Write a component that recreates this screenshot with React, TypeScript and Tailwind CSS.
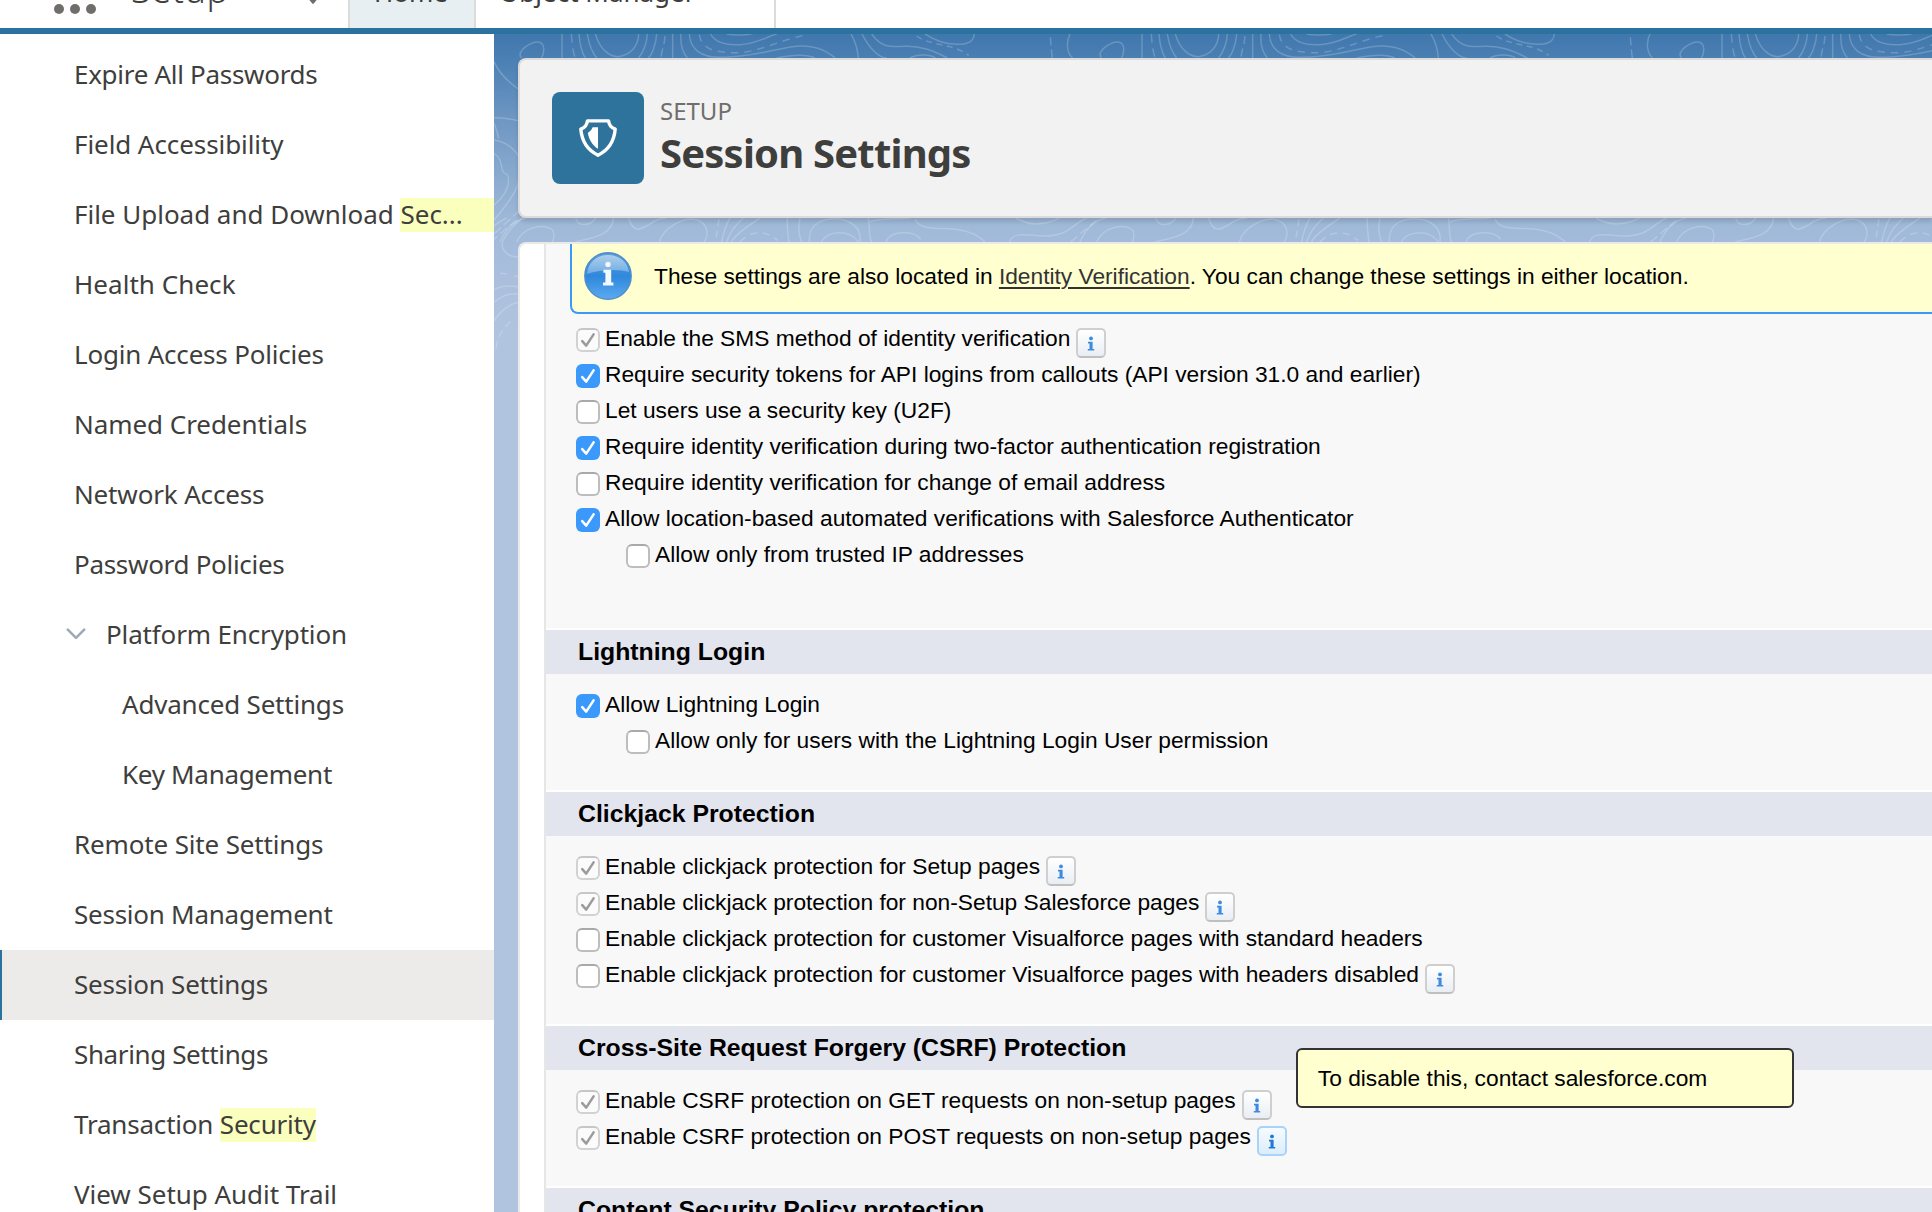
import type { ReactNode } from "react";

type CheckState = "on" | "off" | "locked";

interface Setting {
  label: string;
  state: CheckState;
  indent?: boolean;
  info?: boolean;
  tooltip?: string;
}

interface Section {
  title: string;
  settings: Setting[];
}

interface NavEntry {
  label: ReactNode;
  key: string;
  tracking?: string;
  indent?: boolean;
  selected?: boolean;
  expandable?: boolean;
}

function Mark({ children, wide }: { children: ReactNode; wide?: boolean }) {
  return (
    <span className={`inline-block h-[34px] bg-[#faffbd] leading-8 ${wide ? "w-24" : ""}`}>
      {children}
    </span>
  );
}

const navEntries: NavEntry[] = [
  { key: "expire", label: "Expire All Passwords", tracking: "tracking-[-0.3px]" },
  { key: "field", label: "Field Accessibility", tracking: "tracking-[-0.08px]" },
  {
    key: "file",
    tracking: "tracking-[-0.02px]",
    label: (
      <>
        File Upload and Download <Mark wide>Sec...</Mark>
      </>
    ),
  },
  { key: "health", label: "Health Check", tracking: "tracking-[0.05px]" },
  { key: "login", label: "Login Access Policies", tracking: "tracking-[-0.2px]" },
  { key: "named", label: "Named Credentials", tracking: "tracking-[-0.05px]" },
  { key: "network", label: "Network Access" },
  { key: "password", label: "Password Policies", tracking: "tracking-[-0.3px]" },
  { key: "platform", label: "Platform Encryption", expandable: true },
  { key: "advanced", label: "Advanced Settings", indent: true, tracking: "tracking-[-0.2px]" },
  { key: "keys", label: "Key Management", indent: true, tracking: "tracking-[-0.3px]" },
  { key: "remote", label: "Remote Site Settings" },
  { key: "sessionmgmt", label: "Session Management", tracking: "tracking-[-0.25px]" },
  { key: "session", label: "Session Settings", selected: true, tracking: "tracking-[-0.25px]" },
  { key: "sharing", label: "Sharing Settings", tracking: "tracking-[-0.38px]" },
  {
    key: "transaction",
    tracking: "tracking-[-0.2px]",
    label: (
      <>
        Transaction <Mark>Security</Mark>
      </>
    ),
  },
  { key: "audit", label: "View Setup Audit Trail", tracking: "tracking-[-0.03px]" },
];

const identitySettings: Setting[] = [
  { label: "Enable the SMS method of identity verification", state: "locked", info: true },
  {
    label: "Require security tokens for API logins from callouts (API version 31.0 and earlier)",
    state: "on",
  },
  { label: "Let users use a security key (U2F)", state: "off" },
  { label: "Require identity verification during two-factor authentication registration", state: "on" },
  { label: "Require identity verification for change of email address", state: "off" },
  { label: "Allow location-based automated verifications with Salesforce Authenticator", state: "on" },
  { label: "Allow only from trusted IP addresses", state: "off", indent: true },
];

const sections: Section[] = [
  {
    title: "Lightning Login",
    settings: [
      { label: "Allow Lightning Login", state: "on" },
      {
        label: "Allow only for users with the Lightning Login User permission",
        state: "off",
        indent: true,
      },
    ],
  },
  {
    title: "Clickjack Protection",
    settings: [
      { label: "Enable clickjack protection for Setup pages", state: "locked", info: true },
      { label: "Enable clickjack protection for non-Setup Salesforce pages", state: "locked", info: true },
      {
        label: "Enable clickjack protection for customer Visualforce pages with standard headers",
        state: "off",
      },
      {
        label: "Enable clickjack protection for customer Visualforce pages with headers disabled",
        state: "off",
        info: true,
      },
    ],
  },
  {
    title: "Cross-Site Request Forgery (CSRF) Protection",
    settings: [
      {
        label: "Enable CSRF protection on GET requests on non-setup pages",
        state: "locked",
        info: true,
      },
      {
        label: "Enable CSRF protection on POST requests on non-setup pages",
        state: "locked",
        info: true,
        tooltip: "To disable this, contact salesforce.com",
      },
    ],
  },
  { title: "Content Security Policy protection", settings: [] },
];

function Checkbox({ state }: { state: CheckState }) {
  const look =
    state === "on"
      ? "bg-[#3b99fc]"
      : state === "off"
        ? "border-2 border-[#bdbdbd] border-t-[#a9a9a9] bg-white"
        : "border-2 border-[#d2d2d2] border-t-[#c6c6c6] bg-[#fbfbfb]";
  return (
    <span className={`mt-1.5 flex size-6 shrink-0 items-center justify-center rounded-md ${look}`}>
      {state !== "off" && (
        <svg viewBox="0 0 24 24" className="size-6 shrink-0" fill="none">
          <path
            d="M6.2 13.2L10.2 17.6L17.6 6.4"
            stroke={state === "on" ? "#ffffff" : "#9b9b9b"}
            strokeWidth="2.5"
            strokeLinecap="round"
            strokeLinejoin="round"
          />
        </svg>
      )}
    </span>
  );
}

function InfoButton({ active }: { active?: boolean }) {
  return (
    <span
      className={`mt-1.5 ml-1.5 flex size-[30px] shrink-0 items-center justify-center rounded-[5px] border-2 ${
        active
          ? "border-[#a9d3f8] bg-linear-to-b from-[#f6fbff] to-[#dcedfb]"
          : "border-[#cfcfcf] border-b-[#bfbfbf] bg-linear-to-b from-white to-[#e9eef4]"
      }`}
    >
      <svg viewBox="0 0 10 16" className="mt-px h-4 w-2.5" fill={active ? "#1f78d1" : "#3d8ade"}>
        <circle cx="5" cy="2.4" r="1.9" />
        <path d="M2 5.8H6.6V12.9H8.2V14.6H1.8V12.9H3.5V7.5H2Z" />
      </svg>
    </span>
  );
}

function SettingRow({ setting }: { setting: Setting }) {
  return (
    <div className={`flex h-9 items-start ${setting.indent ? "pl-20" : "pl-[30px]"}`}>
      <Checkbox state={setting.state} />
      <span className="ml-[5px] leading-8 whitespace-nowrap">{setting.label}</span>
      {setting.info && (
        <span className="relative">
          <InfoButton active={Boolean(setting.tooltip)} />
          {setting.tooltip && (
            <span className="absolute -top-[72px] left-[45px] h-[60px] w-[498px] rounded-md border-2 border-[#333333] bg-[#ffffd0] pl-5 leading-[56px] whitespace-nowrap">
              {setting.tooltip}
            </span>
          )}
        </span>
      )}
    </div>
  );
}

function AlertIcon() {
  return (
    <svg viewBox="0 0 48 48" className="size-12 shrink-0">
      <defs>
        <linearGradient id="ball" x1="0" y1="0" x2="0" y2="1">
          <stop offset="0" stopColor="#5f9fd8" />
          <stop offset="0.5" stopColor="#2f88dc" />
          <stop offset="1" stopColor="#5aaaf0" />
        </linearGradient>
        <linearGradient id="gloss" x1="0" y1="0" x2="0" y2="1">
          <stop offset="0" stopColor="#ffffff" stopOpacity="0.5" />
          <stop offset="1" stopColor="#ffffff" stopOpacity="0.28" />
        </linearGradient>
      </defs>
      <circle cx="24" cy="24" r="23.2" fill="url(#ball)" stroke="#4f8fca" strokeWidth="1.4" />
      <path d="M3 22C4 10 13 3 24 3S44 10 45 20C36 17 16 17 3 22Z" fill="url(#gloss)" />
      <circle cx="24" cy="12.4" r="2.7" fill="#f4f8fc" />
      <path d="M19.4 17.8H27.2V30.6H29.4V33.6H19V30.6H21.4V20.8H19.4Z" fill="#f4f8fc" />
    </svg>
  );
}

/* Contour lines that repeat every 580px behind the cards. */
function ContourTile() {
  return (
    <g>
      <path d="M211 22L213 46M214 58L217 84M514 12L516 38M518 55L524 80M795 18L792 42M788 55L783 80" />
      <path d="M270 12C256 40 262 70 278 84" />
      <path d="M364 84C346 62 395 35 415 36C440 40 430 75 425 84" />
      <path d="M486 12V84M818 12V84" />
      <path d="M537 12C540 50 550 75 556 84M562 12C568 50 580 72 590 84" />
      <path d="M586 12C600 60 630 80 655 80C690 76 715 50 716 12" />
      <path d="M742 12C740 50 725 72 716 84M770 12C768 45 755 75 745 84" />
      <path d="M843 12C840 50 850 70 862 84" />
      <path d="M868 12C870 55 900 82 960 82C1080 82 1150 45 1210 48C1260 50 1285 68 1306 84" />
      <path d="M1130 84C1170 76 1220 72 1244 84" />
      <path d="M898 14C905 60 950 70 1020 68C1090 62 1150 25 1225 14" strokeDasharray="22 18" />
      <path d="M932 12C945 38 980 46 1020 44C1070 42 1100 20 1130 12M980 12C1000 16 1030 16 1055 12" />
      <path d="M1353 12C1370 40 1374 70 1375 84M1386 12C1410 60 1440 84 1460 84" />
      <path d="M1415 12C1445 54 1470 50 1510 49C1560 46 1600 62 1642 84M1530 84C1550 72 1590 72 1606 84" />
      <path d="M1550 18C1590 48 1660 40 1706 76" strokeDasharray="18 14" />
      <path d="M1575 12C1610 35 1650 46 1690 42C1712 40 1724 26 1722 12" />

      <path d="M108 564C150 590 200 585 238 564" />
      <path d="M88 636C100 600 150 620 200 618C270 615 280 580 320 564" />
      <path d="M272 636L352 568" strokeDasharray="26 12" />
      <path d="M300 636C320 590 350 570 378 564" />
      <path d="M350 636C370 590 430 580 458 600C466 615 460 630 458 636" />
      <path d="M528 564C530 590 570 590 588 564" />
      <path d="M640 564C640 620 560 625 526 636" />
      <path d="M686 564C700 610 720 600 745 585C770 567 780 566 800 564" />
      <path d="M778 636C790 590 850 565 880 568C930 575 925 620 912 636" />
      <path d="M957 568L946 636" strokeDasharray="20 14" />
      <path d="M990 564C975 590 968 620 965 636M1030 564C1000 590 985 620 980 636M1080 564C1040 590 1000 620 995 636" />
      <path d="M1020 636C1050 600 1100 600 1134 632" strokeDasharray="22 16" />
      <path d="M1162 564C1160 600 1165 620 1167 636M1200 564C1192 600 1198 620 1205 636" />
      <path d="M1228 636C1225 590 1250 570 1300 566C1360 566 1385 600 1380 636" />
      <path d="M1265 636C1280 600 1350 598 1375 636" />
      <path d="M1405 564C1412 600 1405 620 1415 636M1410 575C1440 566 1480 568 1530 564" />
      <path d="M1458 636C1470 600 1540 600 1562 628" />
      <path d="M1545 568C1560 598 1600 595 1650 596C1710 600 1740 620 1755 636" />
    </g>
  );
}

function Backdrop() {
  return (
    <svg
      className="absolute inset-0 h-[1178px] w-[1438px]"
      viewBox="0 0 1438 1178"
      fill="none"
      aria-hidden="true"
    >
      <defs>
        <linearGradient id="sky" gradientUnits="userSpaceOnUse" x1="0" y1="0" x2="0" y2="300">
          <stop offset="0" stopColor="#4077ad" />
          <stop offset="0.08" stopColor="#4a7fb3" />
          <stop offset="0.29" stopColor="#6f97c3" />
          <stop offset="0.5" stopColor="#8dadd0" />
          <stop offset="0.63" stopColor="#9fb9d9" />
          <stop offset="0.85" stopColor="#abc0dd" />
          <stop offset="1" stopColor="#b0c4df" />
        </linearGradient>
      </defs>
      <rect width="1438" height="1178" fill="url(#sky)" />
      <g stroke="#ffffff" strokeOpacity="0.2" strokeWidth="4.5">
        <g transform="translate(-94 -4) scale(0.33333)">
          <ContourTile />
        </g>
        <g transform="translate(486 -4) scale(0.33333)">
          <ContourTile />
        </g>
        <g transform="translate(1066 -4) scale(0.33333)">
          <ContourTile />
        </g>
        <g transform="translate(-14 -14) scale(0.33333)">
          <path d="M42 125C60 165 90 190 115 207M42 293C70 292 95 298 118 303" />
          <path d="M42 308C50 330 54 345 56 356M42 360C80 366 105 390 118 412" />
          <path d="M42 400C70 415 60 448 72 458C90 465 85 480 85 490C82 520 60 540 42 555" />
          <path d="M118 470C118 500 90 545 42 600" />
          <path d="M44 640L118 572" strokeDasharray="26 12" />
        </g>
        <g transform="translate(-4 181) scale(0.33333)">
          <path d="M90 125C50 130 28 100 40 75C60 35 100 5 120 -10" />
          <path d="M30 175L52 177M72 182L85 185" />
          <path d="M12 224C40 210 65 212 85 216M12 262C40 238 65 235 85 237M12 318C30 290 55 268 85 262" />
          <path d="M18 400C22 370 34 345 62 318" strokeDasharray="22 14" />
        </g>
      </g>
    </svg>
  );
}

function TopBar() {
  return (
    <header className="flex h-[34px] shrink-0 overflow-hidden border-b-[6px] border-[#2a739e] bg-white text-[26px] text-[#3e3e3c]">
      <div className="mt-1 ml-[54px] flex gap-1.5">
        <span className="size-2.5 rounded-full bg-[#706e6b]" />
        <span className="size-2.5 rounded-full bg-[#706e6b]" />
        <span className="size-2.5 rounded-full bg-[#706e6b]" />
      </div>
      <span className="-mt-[34px] ml-[35px] w-[175px] text-[36px] leading-[48px] font-light tracking-[0.6px]">
        Setup
      </span>
      <svg viewBox="0 0 14 8" className="-mt-1 h-2 w-3.5 shrink-0 fill-[#706e6b]">
        <path d="M0 0H14L7.8 7.4Q7 8.2 6.2 7.4Z" />
      </svg>
      <div className="ml-7 h-7 w-[128px] shrink-0 border-x-2 border-[#dddbda] bg-[#e8eff3] pl-6">
        <span className="-mt-[26px] block leading-9">Home</span>
      </div>
      <div className="h-7 w-[300px] shrink-0 border-r-2 border-[#dddbda] pl-[23px]">
        <span className="-mt-[26px] block leading-9">Object Manager</span>
      </div>
    </header>
  );
}

function SideNav() {
  return (
    <nav className="w-[494px] shrink-0 overflow-hidden bg-white pt-1.5 text-[26px] text-[#3e3e3c]">
      {navEntries.map((entry) => (
        <div
          key={entry.key}
          className={`relative flex h-[70px] items-start overflow-hidden leading-[68px] whitespace-nowrap ${
            entry.tracking ?? "tracking-[-0.15px]"
          } ${entry.selected ? "bg-[#ecebea]" : ""} ${
            entry.expandable ? "pl-[66px]" : entry.indent ? "pl-[122px]" : "pl-[74px]"
          }`}
        >
          {entry.selected && <span className="absolute inset-y-0 left-0 w-0.5 bg-[#2a739e]" />}
          {entry.expandable && (
            <svg
              viewBox="0 0 20 12"
              className="mt-7 mr-5 h-3 w-5 shrink-0 fill-none stroke-[#9faab5]"
              strokeWidth="2.6"
              strokeLinecap="round"
              strokeLinejoin="round"
            >
              <path d="M1.8 1.6L10 9.8L18.2 1.6" />
            </svg>
          )}
          <span>{entry.label}</span>
        </div>
      ))}
    </nav>
  );
}

function PageHeader() {
  return (
    <div className="flex h-40 rounded-l-lg border-2 border-r-0 border-[#dddbda] bg-[#f2f2f2] pt-8 pl-8 shadow-[0_4px_4px_rgba(0,0,0,0.12)]">
      <div className="flex size-[92px] items-center justify-center rounded-lg bg-[#2e739b]">
        <svg viewBox="0 0 40 40" className="size-10" fill="none">
          <path
            d="M9.4 2.9H30.600C31 7.600 33.600 9.800 37.200 11.200C36.200 22.800 30.500 32.200 20 37.200C9.500 32.200 3.800 22.800 2.800 11.200C6.400 9.800 9 7.600 9.400 2.900Z"
            stroke="#ffffff"
            strokeWidth="3.4"
            strokeLinejoin="round"
          />
          <path
            d="M20 9.300H14.600C13.400 12.200 11.800 13.600 9.800 14.900C11 21.600 14.400 27 20 30.800Z"
            fill="#ffffff"
          />
        </svg>
      </div>
      <div className="mt-1 ml-4 flex flex-col">
        <span className="text-2xl leading-[30px] text-[#706e6b]">SETUP</span>
        <h1 className="mt-[3px] text-[40px] leading-[48px] font-bold tracking-[-0.8px] text-[#3e3e3c]">
          Session Settings
        </h1>
      </div>
    </div>
  );
}

export default function App() {
  return (
    <div className="flex h-[1212px] w-[1932px] flex-col overflow-hidden bg-white font-['Noto_Sans',sans-serif]">
      <TopBar />
      <div className="flex min-h-0 flex-1">
        <SideNav />
        <main className="relative min-w-0 flex-1 overflow-hidden">
          <Backdrop />
          <div className="relative flex h-full flex-col pt-6 pl-6">
            <PageHeader />
            <div className="mt-6 min-h-0 flex-1 overflow-hidden rounded-tl-lg border-t-2 border-l-2 border-[#ebe9e8] bg-white pl-6">
              <div className="h-full border-l-2 border-[#e6e6e6] bg-[#f8f8f8] font-['Liberation_Sans',Arial,sans-serif] text-[22.75px] text-black">
                <div className="ml-6 flex h-[70px] items-start rounded-bl-lg border-b-2 border-l-2 border-[#3b99fc] bg-[#ffffd0] pt-2 pl-3">
                  <AlertIcon />
                  <p className="mt-1.5 ml-[22px] leading-9 tracking-[-0.01px] whitespace-nowrap">
                    These settings are also located in{" "}
                    <a className="text-[#333333] underline decoration-2 underline-offset-[3px]">
                      Identity Verification
                    </a>
                    . You can change these settings in either location.
                  </p>
                </div>
                <div className="pt-2 pb-[54px]">
                  {identitySettings.map((setting) => (
                    <SettingRow key={setting.label} setting={setting} />
                  ))}
                </div>
                {sections.map((section) => (
                  <section key={section.title}>
                    <h2 className="h-[46px] border-t-2 border-white bg-[#e3e5ee] pl-8 text-[24.8px] leading-[43px] font-bold whitespace-nowrap">
                      {section.title}
                    </h2>
                    <div className="pt-3.5 pb-[30px]">
                      {section.settings.map((setting) => (
                        <SettingRow key={setting.label} setting={setting} />
                      ))}
                    </div>
                  </section>
                ))}
              </div>
            </div>
          </div>
        </main>
      </div>
    </div>
  );
}
